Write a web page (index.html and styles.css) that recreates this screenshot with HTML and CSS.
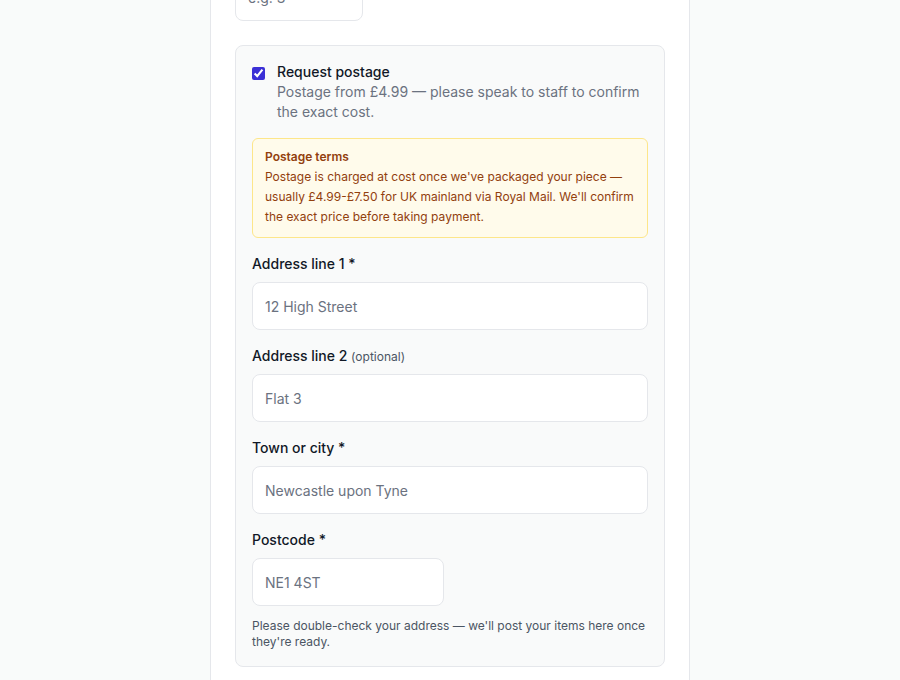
FILE: index.html
```html
<!DOCTYPE html>
<html lang="en">
<head>
<meta charset="utf-8">
<title>Postage</title>
<link rel="stylesheet" href="styles.css">
</head>
<body>
<div class="page">
  <div class="card">
    <input class="input input-small" type="text" placeholder="e.g. 3">
    <section class="postage">
      <label class="check-row">
        <input class="check" type="checkbox" checked>
        <span class="check-text">
          <span class="check-title">Request postage</span>
          <span class="check-desc">Postage from £4.99 — please speak to staff to confirm the exact cost.</span>
        </span>
      </label>
      <div class="note">
        <div class="note-title">Postage terms</div>
        <div class="note-body">Postage is charged at cost once we've packaged your piece — usually £4.99-£7.50 for UK mainland via Royal Mail. We'll confirm the exact price before taking payment.</div>
      </div>
      <div class="field">
        <label class="label">Address line 1 *</label>
        <input class="input" type="text" placeholder="12 High Street">
      </div>
      <div class="field">
        <label class="label">Address line 2 <span class="optional">(optional)</span></label>
        <input class="input" type="text" placeholder="Flat 3">
      </div>
      <div class="field">
        <label class="label">Town or city *</label>
        <input class="input" type="text" placeholder="Newcastle upon Tyne">
      </div>
      <div class="field">
        <label class="label">Postcode *</label>
        <input class="input input-post" type="text" placeholder="NE1 4ST">
        <p class="help">Please double-check your address — we'll post your items here once they're ready.</p>
      </div>
    </section>
  </div>
</div>
</body>
</html>
```

FILE: styles.css
```css
* { box-sizing: border-box; }
html, body {
  margin: 0;
  padding: 0;
  background: #f9fbfa;
  font-family: Inter, "Liberation Sans", sans-serif;
  color: #111827;
  overflow: hidden;
}
.page {
  display: flex;
  justify-content: center;
  height: 680px;
}
.card {
  width: 480px;
  background: #ffffff;
  border: 1px solid #e5e7eb;
  border-radius: 12px;
  padding: 0 24px 24px;
  margin-top: -60px;
  display: flex;
  flex-direction: column;
  align-items: flex-start;
  height: 800px;
}
.input {
  display: block;
  width: 100%;
  height: 48px;
  border: 1px solid #e5e7eb;
  border-radius: 8px;
  background: #ffffff;
  padding: 0 12px;
  font-family: Inter, "Liberation Sans", sans-serif;
  font-size: 14px;
  color: #111827;
  outline: none;
}
.input::placeholder { color: #6b7280; opacity: 1; }
.input-small {
  width: 128px;
  margin-top: 32px;
}
.input-post { width: 192px; }
.postage {
  width: 100%;
  margin-top: 24px;
  background: #f9fafa;
  border: 1px solid #e5e7eb;
  border-radius: 8px;
  padding: 16px;
  display: flex;
  flex-direction: column;
  gap: 16px;
}
.check-row {
  display: flex;
  gap: 12px;
  align-items: flex-start;
  cursor: pointer;
}
.check {
  width: 13px;
  height: 13px;
  margin: 5px 0 0 0;
  accent-color: #3b2fd6;
  flex: none;
}
.check-text {
  display: flex;
  flex-direction: column;
  font-size: 14px;
  line-height: 20px;
}
.check-title { font-weight: 500; color: #111827; }
.check-desc { color: #6b7280; }
.note {
  background: #fffbeb;
  border: 1px solid #fde68a;
  border-radius: 6px;
  padding: 10px 12px;
  color: #92400e;
  font-size: 12px;
}
.note-title {
  font-weight: 600;
  line-height: 16px;
}
.note-body {
  line-height: 20px;
  margin-top: 2px;
}
.field {
  display: flex;
  flex-direction: column;
}
.label {
  display: block;
  height: 20px;
  font-size: 14px;
  line-height: 20px;
  font-weight: 500;
  color: #111827;
  margin-bottom: 8px;
}
.optional {
  font-size: 12px;
  line-height: 1;
  font-weight: 400;
  color: #4b5563;
}
.help {
  margin: 12px 0 0;
  font-size: 12px;
  line-height: 16px;
  color: #4b5563;
}
```
